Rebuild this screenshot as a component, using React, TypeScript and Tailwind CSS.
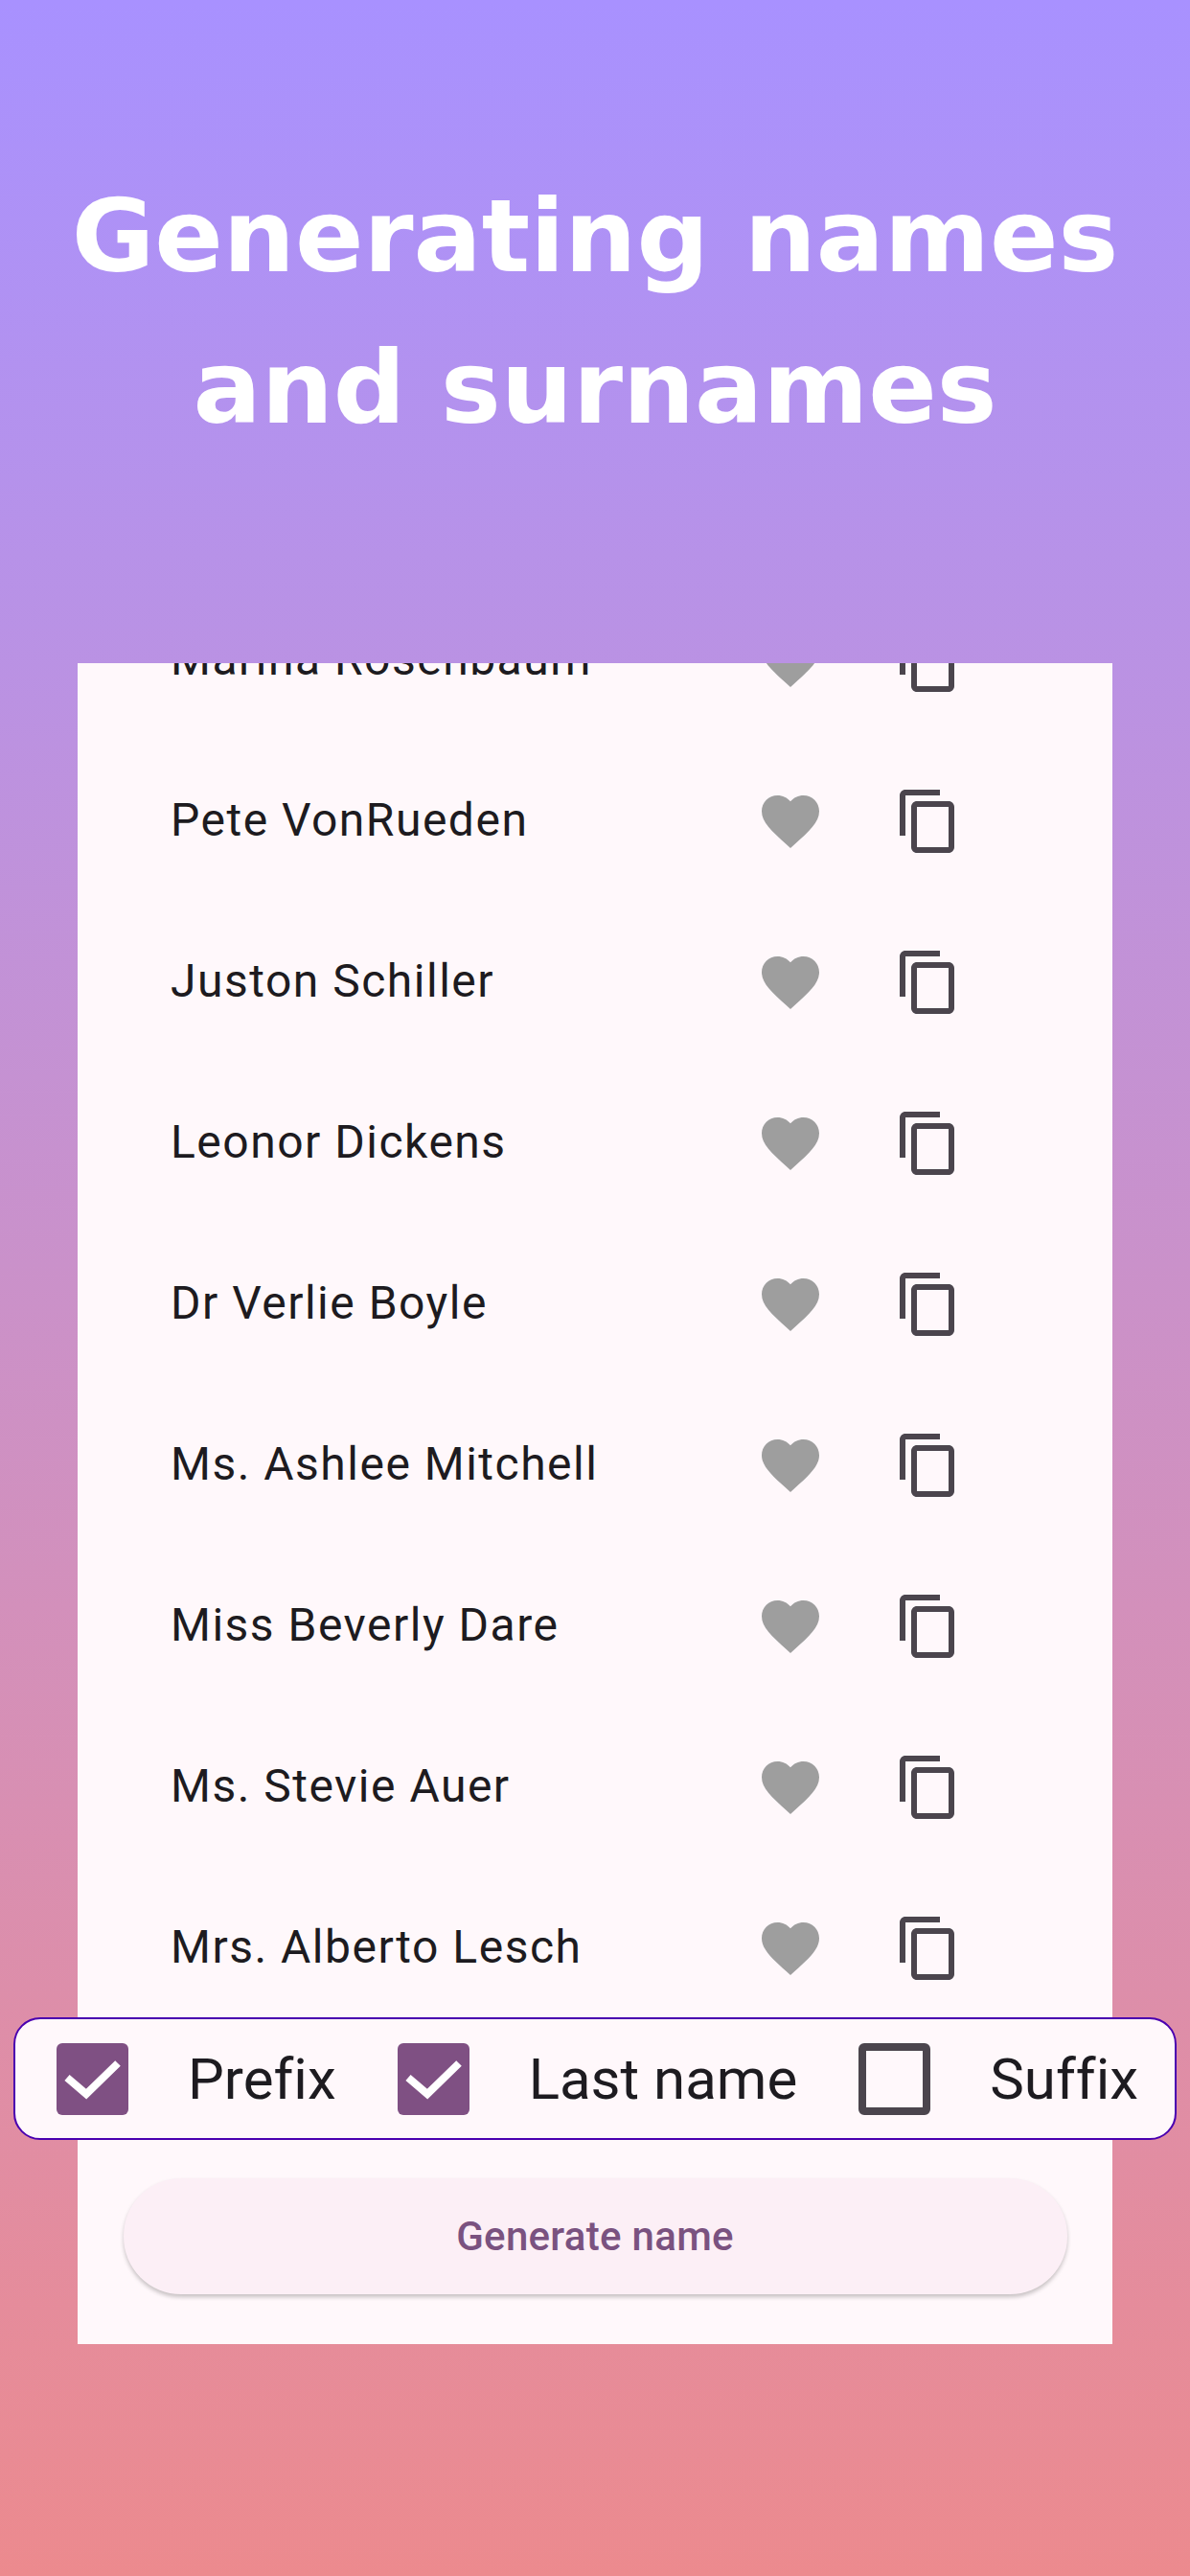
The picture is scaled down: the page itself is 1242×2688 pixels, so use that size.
import React from "react";

const names = [
  "Marina Rosenbaum",
  "Pete VonRueden",
  "Juston Schiller",
  "Leonor Dickens",
  "Dr Verlie Boyle",
  "Ms. Ashlee Mitchell",
  "Miss Beverly Dare",
  "Ms. Stevie Auer",
  "Mrs. Alberto Lesch",
];

const HeartIcon = () => (
  <svg viewBox="0 0 24 24" className="w-[72px] h-[72px] fill-[#9e9e9e]">
    <path d="M12 21.35l-1.45-1.32C5.4 15.36 2 12.28 2 8.5 2 5.42 4.42 3 7.5 3c1.74 0 3.41.81 4.5 2.09C13.09 3.81 14.76 3 16.5 3 19.58 3 22 5.42 22 8.5c0 3.78-3.4 6.86-8.55 11.54L12 21.35z" />
  </svg>
);

const CopyIcon = () => (
  <svg viewBox="0 0 24 24" className="w-[72px] h-[72px] fill-[#4b454d]">
    <path d="M16 1H4c-1.1 0-2 .9-2 2v14h2V3h12V1zm3 4H8c-1.1 0-2 .9-2 2v14c0 1.1.9 2 2 2h11c1.1 0 2-.9 2-2V7c0-1.1-.9-2-2-2zm0 16H8V7h11v14z" />
  </svg>
);

const CheckOption = ({ label, checked }: { label: string; checked: boolean }) => (
  <div className="flex items-center gap-[62px]">
    {checked ? (
      <div className="w-[75px] h-[75px] rounded-[6px] bg-[#7f5083]">
        <svg viewBox="0 0 75 75" className="w-[75px] h-[75px] fill-none stroke-white stroke-[8]">
          <path d="M11 36 L31 53 L64 21" />
        </svg>
      </div>
    ) : (
      <div className="w-[75px] h-[75px] rounded-[6px] border-[8px] border-[#4b454d]" />
    )}
    <span className="text-[60px] leading-[75px] text-[#1d1b20] [font-variant-ligatures:none]">{label}</span>
  </div>
);

export default function App() {
  return (
    <div className="h-[2688px] w-[1242px] flex flex-col items-center bg-gradient-to-b from-[#a891ff] to-[#ec8a8e] font-['Roboto',sans-serif]">
      <h1 className="h-[692px] pt-[168px] text-center text-[105.5px] leading-[158px] font-bold text-white font-['DejaVu_Sans',sans-serif]">
        Generating names
        <br />
        and surnames
      </h1>

      <div className="w-[1080px] h-[1754px] bg-[#fff8fb] flex flex-col items-center">
        <div className="w-full h-[1413px] overflow-hidden">
          <div className="-mt-[88px]">
            {names.map((name) => (
              <div key={name} className="h-[168px] flex items-center pl-[97px] pr-[156px]">
                <span className="flex-1 text-[48px] tracking-[1.5px] text-[#1d1b20]">{name}</span>
                <div className="flex gap-[72px] mt-[2px]">
                  <HeartIcon />
                  <CopyIcon />
                </div>
              </div>
            ))}
          </div>
        </div>

        <div className="w-[1214px] h-[128px] shrink-0 rounded-[28px] border-2 border-[#4a00b0] bg-[#fff8fb] flex items-center justify-between pl-[43px] pr-[38px]">
          <CheckOption label="Prefix" checked />
          <CheckOption label="Last name" checked />
          <CheckOption label="Suffix" checked={false} />
        </div>

        <button className="mt-[40px] w-[985px] h-[121px] rounded-[60px] bg-[#fceff6] shadow-[0_3px_4px_rgba(0,0,0,0.22)] text-[42px] tracking-[0.3px] font-medium text-[#7a5280]">
          Generate name
        </button>
      </div>
    </div>
  );
}
